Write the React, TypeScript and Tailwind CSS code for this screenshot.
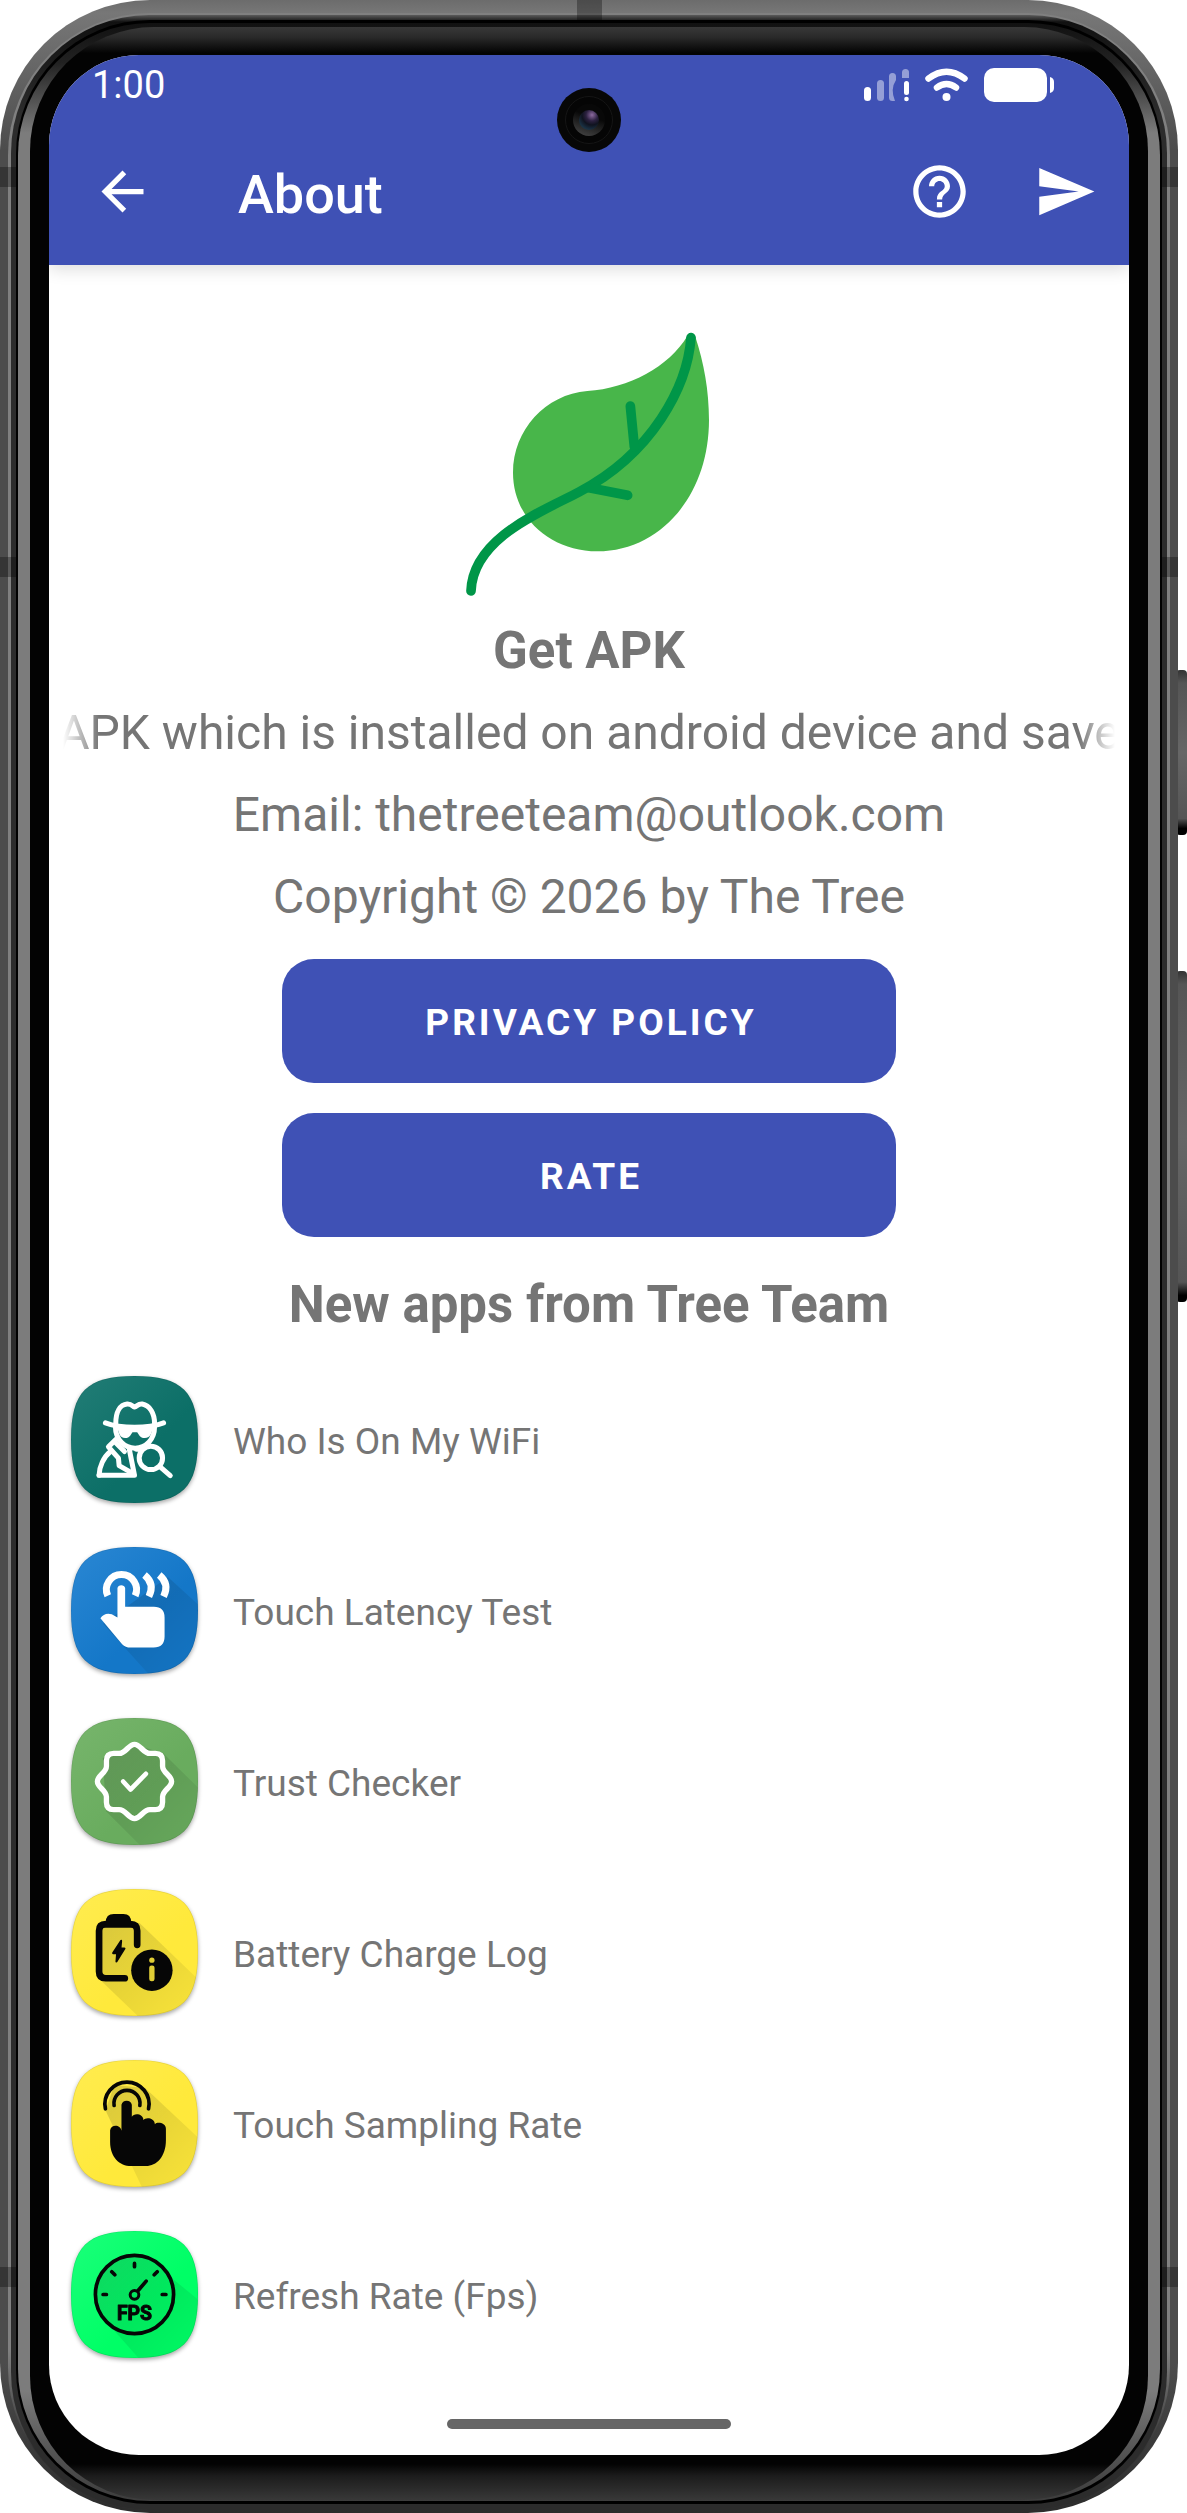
import type { ReactNode } from "react";
import { MdArrowBack, MdHelpOutline, MdSend } from "react-icons/md";

const SQUIRCLE = "M190 0C333 0 380 47 380 190S333 380 190 380 0 333 0 190 47 0 190 0Z";

function AppIcon({
  id,
  from,
  to,
  shade,
  children,
}: {
  id: string;
  from: string;
  to: string;
  shade: string;
  children: ReactNode;
}) {
  return (
    <svg
      viewBox="0 0 380 380"
      aria-hidden="true"
      className="size-[127px] shrink-0 overflow-visible drop-shadow-[0_2px_2px_rgba(0,0,0,0.35)]"
    >
      <defs>
        <linearGradient id={`${id}-bg`} x1="0" y1="0" x2="1" y2="1">
          <stop offset="0" stopColor={from} />
          <stop offset="0.6" stopColor={to} />
        </linearGradient>
        <linearGradient id={`${id}-shade`} gradientUnits="userSpaceOnUse" x1="90" y1="90" x2="340" y2="340">
          <stop offset="0" stopColor="#000" stopOpacity="0.15" />
          <stop offset="1" stopColor="#000" stopOpacity="0.04" />
        </linearGradient>
        <clipPath id={`${id}-clip`}>
          <path d={SQUIRCLE} />
        </clipPath>
      </defs>
      <path d={SQUIRCLE} fill={`url(#${id}-bg)`} />
      <g clipPath={`url(#${id}-clip)`}>
        <path d={shade} fill={`url(#${id}-shade)`} />
        <path d={SQUIRCLE} fill="none" stroke="#000" strokeOpacity="0.1" strokeWidth="3" />
      </g>
      {children}
    </svg>
  );
}

const apps = [
  {
    name: "Who Is On My WiFi",
    icon: (
      <AppIcon id="wifi" from="#227d76" to="#0c6f67" shade="M0 0Z">
        <g fill="none" stroke="#fff" strokeWidth="15" strokeLinecap="round" strokeLinejoin="round">
          <path d="M134 142C134 108 146 86 168 84C182 83 184 92 190 93C197 92 200 83 213 84C236 88 250 112 250 142" />
          <path d="M103 140C150 158 230 158 277 140" />
          <path d="M133 152C133 190 160 216 192 216C224 216 250 190 250 152" />
          <path d="M84 297H190L175 222" />
          <path d="M84 297C84 272 98 242 118 226" />
          <path d="M134 190L112 212L142 246L144 268L186 292" />
          <path d="M134 200L160 226M196 219H210" />
          <circle cx="239" cy="245" r="35" />
          <path d="M266 271L297 298" />
        </g>
        <path
          fill="#fff"
          d="M138 154H246L240 172C233 190 210 190 202 174L198 168H184L180 174C172 190 150 190 144 172Z"
        />
      </AppIcon>
    ),
  },
  {
    name: "Touch Latency Test",
    icon: (
      <AppIcon id="latency" from="#2a87d3" to="#1477c8" shade="M290 90L380 172V380H232L96 230Z">
        <g fill="none" stroke="#fff" strokeWidth="21">
          <path d="M110 146A45 45 0 1 1 192 146" />
          <path d="M220 84C243 103 244 126 233 148" />
          <path d="M264 84C287 103 288 126 277 148" />
        </g>
        <path
          fill="#fff"
          d="M139 123A12 12 0 0 1 162 123V179H248Q280 179 280 211V268Q280 301 247 301H178Q163 301 153 291L88 213Q100 195 122 201L139 211Z"
        />
      </AppIcon>
    ),
  },
  {
    name: "Trust Checker",
    icon: (
      <AppIcon id="trust" from="#77b56c" to="#69ac5e" shade="M275 105L380 208V380H206L105 279L95 120L190 80Z">
        <g
          fill="none"
          stroke="#fff"
          strokeWidth="16"
          strokeLinecap="round"
          strokeLinejoin="round"
          transform="translate(190 190)"
        >
          <path d="M0 -111C-18 -111 -26 -84 -46 -84H-62Q-84 -84 -84 -62V-46C-84 -26 -111 -18 -111 0C-111 18 -84 26 -84 46V62Q-84 84 -62 84H-46C-26 84 -18 111 0 111C18 111 26 84 46 84H62Q84 84 84 62V46C84 26 111 18 111 0C111 -18 84 -26 84 -46V-62Q84 -84 62 -84H46C26 -84 18 -111 0 -111Z" />
          <path d="M-34 0L-12 24L34 -23" strokeWidth="14" />
        </g>
      </AppIcon>
    ),
  },
  {
    name: "Battery Charge Log",
    icon: (
      <AppIcon id="battery" from="#ffec50" to="#ffe93b" shade="M205 102L380 270V380H200L80 265V105Z">
        <path
          d="M161 267H104Q84 267 84 247V125Q84 105 104 105H178Q198 105 198 125V167"
          fill="none"
          stroke="#060606"
          strokeWidth="20"
          strokeLinecap="round"
        />
        <path d="M104 100Q104 75 128 75H157Q180 75 180 100L186 115H98Z" fill="#060606" />
        <path
          d="M150 155L126 192H138L136 217L160 178H148Z"
          fill="#060606"
          stroke="#060606"
          strokeWidth="6"
          strokeLinejoin="round"
        />
        <circle cx="242" cy="243" r="62" fill="#060606" />
        <circle cx="242" cy="213" r="8" fill="#e0cd35" />
        <rect x="234" y="229" width="16" height="47" rx="7" fill="#e0cd35" />
      </AppIcon>
    ),
  },
  {
    name: "Touch Sampling Rate",
    icon: (
      <AppIcon id="sampling" from="#ffec50" to="#ffe93b" shade="M222 84L380 232V380H212L103 150L130 75Z">
        <g fill="none" stroke="#060606" strokeWidth="11" strokeLinecap="round">
          <path d="M103 146A66 66 0 1 1 232 146" />
          <path d="M129 136A39 39 0 1 1 206 136" />
        </g>
        <path
          fill="#060606"
          d="M151 134A16 16 0 0 1 182 134V170C188 158 216 160 217 180C222 170 250 172 251 192C258 184 284 188 284 206V240C284 290 255 317 225 317H180C145 317 117 290 117 245V210C120 192 148 192 151 212Z"
        />
      </AppIcon>
    ),
  },
  {
    name: "Refresh Rate (Fps)",
    icon: (
      <AppIcon
        id="fps"
        from="#1bff7a"
        to="#00ff66"
        shade="M190 73A117 117 0 0 1 292 133L380 205V380H202L107 273A117 117 0 0 1 190 73Z"
      >
        <g fill="none" stroke="#060606" strokeWidth="11" strokeLinecap="round">
          <circle cx="190" cy="190" r="117" />
          <path d="M190 97V107M96 190H106M273 190H284M122 122L131 131M258 122L249 131M201 178L225 150" />
          <circle cx="190" cy="191" r="13" strokeWidth="9" />
        </g>
        <text
          x="190"
          y="265"
          textAnchor="middle"
          fontSize="58"
          fontWeight="700"
          fill="#060606"
          stroke="#060606"
          strokeWidth="3"
          strokeLinejoin="round"
        >
          FPS
        </text>
      </AppIcon>
    ),
  },
];

function StatusIcons() {
  return (
    <div className="flex items-center gap-4">
      <svg viewBox="0 0 45 34" className="h-[34px] w-[45px]" aria-hidden="true">
        <rect x="0" y="19" width="7" height="14" rx="3.5" fill="#fff" />
        <g fill="#fff" fillOpacity="0.45">
          <rect x="13" y="12" width="7" height="21" rx="3.5" />
          <path d="M25 8.500A3.500 3.500 0 0 1 32 8.500V12Q26 21 31 33H28.500Q25 33 25 29.500Z" />
          <path d="M38 4.500A3.500 3.500 0 0 1 45 4.500V10H38Z" />
        </g>
        <rect x="40" y="13" width="5" height="14" rx="2.500" fill="#fff" />
        <circle cx="42.500" cy="31" r="2.300" fill="#fff" />
      </svg>
      <svg viewBox="0 0 43 34" className="h-[34px] w-[43px]" aria-hidden="true">
        <g fill="none" stroke="#fff" strokeWidth="6.500" strokeLinecap="round">
          <path d="M3.500 10.500Q21.500 -3 39.500 10.500" />
          <path d="M12 19.500Q21.500 12.500 31 19.500" />
        </g>
        <circle cx="21.500" cy="29" r="4" fill="#fff" />
      </svg>
      <svg viewBox="0 0 70 34" className="h-[34px] w-[70px]" aria-hidden="true">
        <rect x="0" y="0" width="63" height="34" rx="10" fill="#fff" />
        <path d="M66 9Q70 10 70 14V20Q70 24 66 25Z" fill="#fff" />
      </svg>
    </div>
  );
}

function Leaf() {
  return (
    <svg viewBox="0 0 900 900" className="size-[300px]" role="img" aria-label="Get APK logo">
      <path
        fill="#48b64a"
        d="M745 78C690 170 570 235 445 243C320 253 222 360 222 488C222 625 335 724 475 724C665 724 810 555 810 330C810 240 795 160 769 80Z"
      />
      <g fill="none" stroke="#009648" strokeWidth="29" strokeLinecap="round">
        <path d="M756 83C745 230 640 430 420 546C320 600 102 680 96 843" />
        <path d="M574 288L586 410M450 533L566 556" />
      </g>
    </svg>
  );
}

function Camera() {
  return (
    <div className="absolute top-[33px] left-1/2 flex size-16 -translate-x-1/2 items-center justify-center rounded-full bg-[#070707]">
      <div className="flex size-12 items-center justify-center rounded-full border border-[#151515] bg-[#050505]">
        <div className="flex size-8 items-center justify-center rounded-full bg-[linear-gradient(200deg,#080808_40%,#4a4a4a)]">
          <div className="size-5 rounded-full bg-[radial-gradient(circle_at_65%_25%,#8d6aa0_0,#2c2140_30%,#10131f_50%,#1d3d52_85%)]" />
        </div>
      </div>
    </div>
  );
}

function Button({ children }: { children: ReactNode }) {
  return (
    <button
      type="button"
      className="h-[124px] w-[614px] max-w-full rounded-[32px] bg-[#3f51b5] pt-1 pl-1 text-[37px] font-bold tracking-[3px] text-white uppercase"
    >
      {children}
    </button>
  );
}

function Screen() {
  return (
    <div className="relative overflow-hidden rounded-[90px] bg-white text-[#757575]">
      <header className="relative h-[210px] bg-[#3f51b5] text-white shadow-[0_4px_16px_rgba(0,0,0,0.14)]">
        <div className="flex h-[60px] items-center justify-between pr-[75px] pl-[43px]">
          <span className="text-[38px]">1:00</span>
          <StatusIcons />
        </div>
        <div className="flex h-[152px] items-center pr-[32px] pl-[42px]">
          <button type="button" aria-label="Back">
            <MdArrowBack className="size-[63px]" />
          </button>
          <h1 className="ml-[84px] flex-1 pt-1.5 text-[54px] font-medium">About</h1>
          <div className="flex gap-[63px]">
            <button type="button" aria-label="Help">
              <MdHelpOutline className="size-[63px]" />
            </button>
            <button type="button" aria-label="Send feedback">
              <MdSend className="size-[63px]" />
            </button>
          </div>
        </div>
      </header>
      <Camera />

      <main className="flex flex-col items-center px-[14px] pt-[45px] text-[48px] leading-[82px]">
        <Leaf />
        <h2 className="text-[51px] font-bold">Get APK</h2>
        <p className="flex w-full justify-center overflow-hidden whitespace-nowrap [mask-image:linear-gradient(90deg,transparent,#000_36px,#000_calc(100%-36px),transparent)]">
          APK which is installed on android device and save
        </p>
        <p>Email: thetreeteam@outlook.com</p>
        <p>Copyright © 2026 by The Tree</p>
        <div className="mt-[21px] flex w-full flex-col items-center gap-[30px]">
          <Button>Privacy Policy</Button>
          <Button>Rate</Button>
        </div>
        <h2 className="mt-[27px] mb-2 text-[51px] font-bold">New apps from Tree Team</h2>
        <ul className="w-full">
          {apps.map((app) => (
            <li key={app.name}>
              <a href="#" className="flex h-[171px] items-center gap-[35px] pl-2 text-[37px]">
                {app.icon}
                <span className="pt-1">{app.name}</span>
              </a>
            </li>
          ))}
        </ul>
      </main>
      <div className="mx-auto mt-[39px] mb-[26px] h-[10px] w-[284px] rounded-full bg-[#666]" />
    </div>
  );
}

export default function App() {
  return (
    <div className="bg-white pr-[9px] font-[Roboto,sans-serif]">
      <div className="relative">
        <div className="absolute top-[670px] -right-[9px] h-[165px] w-[11px] rounded-[4px] bg-[linear-gradient(180deg,#333_0,#555_8%,#666_50%,#555_90%,#000_96%)]" />
        <div className="absolute top-[971px] -right-[9px] h-[331px] w-[11px] rounded-[4px] bg-[linear-gradient(180deg,#333_0,#555_4%,#666_50%,#555_94%,#000_98%)]" />

        <div className="relative overflow-hidden rounded-[150px] bg-[linear-gradient(180deg,#6c6c6c_0,#777_13px,#4c4c4c_150px,#4c4c4c_calc(100%-150px),#2c2c2c)] px-2 pt-[13px] pb-[3px]">
          <div className="rounded-[142px] bg-[linear-gradient(180deg,#808080_0,#808080_calc(100%-160px),#333_calc(100%-60px))] px-[3px] pt-[2px]">
            <div className="rounded-[138px] bg-[linear-gradient(180deg,#5a5a5a_0,#111_7px,#2c2c2c_100px,#2c2c2c)] px-[5px] pt-[5px] pb-[6px]">
              <div className="rounded-[134px] bg-black px-[2px] pt-[3px] pb-[3px]">
                <div className="rounded-[132px] bg-[linear-gradient(180deg,#111_0,#222_40px,#7c7c7c_110px,#7c7c7c_calc(100%-110px),#555_calc(100%-50px),#3c3c3c)] px-[12px] pt-[4px] pb-[1px]">
                  <div className="rounded-[124px] bg-[linear-gradient(180deg,#383838_0,#2a2a2a_10px,#030303_26px,#030303_calc(100%-36px),#1c1c1c_calc(100%-24px),#383838)] px-[19px] pt-[28px] pb-[45px]">
                    <Screen />
                  </div>
                </div>
              </div>
            </div>
          </div>
          <div className="absolute top-0 left-[577px] h-5 w-[25px] bg-black/30" />
          <div className="absolute top-[167px] left-0 h-5 w-4 bg-black/30" />
          <div className="absolute top-[167px] right-0 h-5 w-4 bg-black/30" />
          <div className="absolute top-[557px] left-0 h-5 w-4 bg-black/30" />
          <div className="absolute top-[557px] right-0 h-5 w-4 bg-black/30" />
          <div className="absolute bottom-[226px] left-0 h-5 w-4 bg-black/30" />
          <div className="absolute right-0 bottom-[226px] h-5 w-4 bg-black/30" />
        </div>
      </div>
    </div>
  );
}
